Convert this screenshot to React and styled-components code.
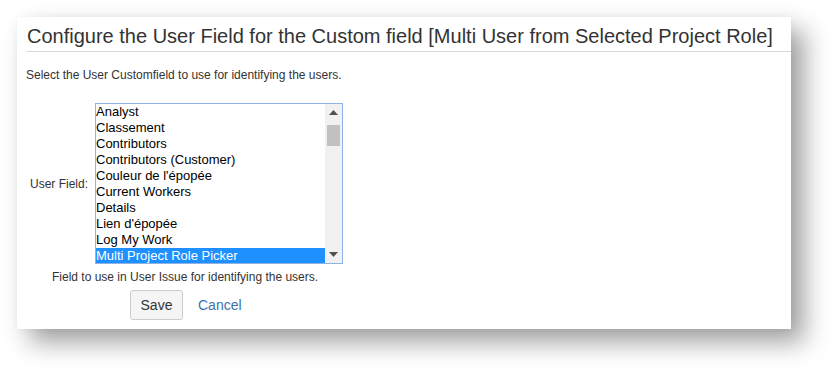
import React from "react";
import styled, { createGlobalStyle } from "styled-components";

const Global = createGlobalStyle`
  html, body { margin: 0; padding: 0; background: #ffffff; }
  body { font-family: Arial, "Liberation Sans", sans-serif; color: #333; }
`;

const Page = styled.div`
  padding: 17px 48px 48px 17px;
`;

const Card = styled.div`
  width: 774px;
  height: 312px;
  box-sizing: border-box;
  background: #fff;
  box-shadow: 13px 13px 24px rgba(0, 0, 0, 0.38), 0 0 8px rgba(0, 0, 0, 0.04);
  padding: 0 0 9px 9px;
  display: flex;
  flex-direction: column;
`;

const Header = styled.h2`
  margin: 0;
  padding: 8px 0 3px 1px;
  font-size: 20px;
  line-height: 23px;
  font-weight: normal;
  color: #333;
  border-bottom: 1px solid #d8d8d8;
`;

const Description = styled.p`
  margin: 15px 0 0;
  font-size: 12px;
  line-height: 16px;
  color: #333;
`;

const FieldRow = styled.div`
  margin-top: 20px;
  display: flex;
  align-items: center;
`;

const Label = styled.label`
  width: 62px;
  text-align: right;
  font-size: 12px;
  color: #333;
  padding-right: 7px;
`;

const ListBox = styled.div`
  width: 248px;
  height: 161px;
  box-sizing: border-box;
  border: 1px solid #8fb1e3;
  display: flex;
  background: #fff;
`;

const Options = styled.div`
  flex: 1;
  display: flex;
  flex-direction: column;
  overflow: hidden;
`;

const Option = styled.div`
  height: 16px;
  line-height: 16px;
  font-size: 13px;
  padding-left: 0;
  white-space: nowrap;
  color: ${(p) => (p.$selected ? "#fff" : "#000")};
  background: ${(p) => (p.$selected ? "#1e90ff" : "transparent")};
`;

const Scrollbar = styled.div`
  width: 17px;
  background: #f1f1f1;
  display: flex;
  flex-direction: column;
  align-items: center;
`;

const Arrow = styled.div`
  height: 17px;
  width: 17px;
  display: flex;
  align-items: center;
  justify-content: center;
`;

const Thumb = styled.div`
  margin-top: 4px;
  width: 13px;
  height: 21px;
  background: #c1c1c1;
`;

const Spacer = styled.div`
  flex: 1;
`;

const Hint = styled.div`
  margin: 5px 0 0 26px;
  font-size: 12px;
  line-height: 16px;
  color: #333;
`;

const Actions = styled.div`
  margin: 5px 0 0 104px;
  display: flex;
  align-items: center;
  gap: 15px;
`;

const Button = styled.button`
  height: 30px;
  width: 53px;
  box-sizing: border-box;
  background: #f5f5f5;
  border: 1px solid #cccccc;
  border-radius: 3px;
  font-family: Arial, "Liberation Sans", sans-serif;
  font-size: 14px;
  color: #333;
  padding: 0;
`;

const LinkButton = styled.a`
  font-size: 14px;
  color: #3b73af;
  text-decoration: none;
`;

const items = [
  "Analyst",
  "Classement",
  "Contributors",
  "Contributors (Customer)",
  "Couleur de l'épopée",
  "Current Workers",
  "Details",
  "Lien d'épopée",
  "Log My Work",
  "Multi Project Role Picker",
];

const Tri = ({ up }) => (
  <svg width="9" height="5" viewBox="0 0 9 5">
    <path d={up ? "M0 5 L4.5 0 L9 5 Z" : "M0 0 L9 0 L4.5 5 Z"} fill="#505050" />
  </svg>
);

export default function App() {
  return (
    <>
      <Global />
      <Page>
        <Card>
          <Header>Configure the User Field for the Custom field [Multi User from Selected Project Role]</Header>
          <Description>Select the User Customfield to use for identifying the users.</Description>
          <FieldRow>
            <Label>User Field:</Label>
            <ListBox>
              <Options>
                {items.map((it, i) => (
                  <Option key={it} $selected={i === items.length - 1}>
                    {it}
                  </Option>
                ))}
              </Options>
              <Scrollbar>
                <Arrow>
                  <Tri up />
                </Arrow>
                <Thumb />
                <Spacer />
                <Arrow>
                  <Tri />
                </Arrow>
              </Scrollbar>
            </ListBox>
          </FieldRow>
          <Hint>Field to use in User Issue for identifying the users.</Hint>
          <Actions>
            <Button>Save</Button>
            <LinkButton href="#">Cancel</LinkButton>
          </Actions>
        </Card>
      </Page>
    </>
  );
}
